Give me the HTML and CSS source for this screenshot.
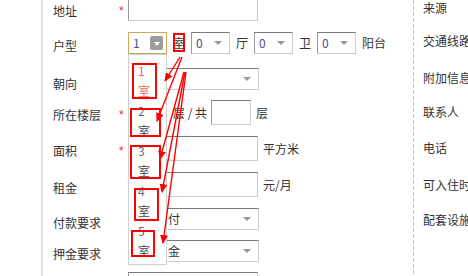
FILE: index.html
```html
<!DOCTYPE html>
<html lang="zh-CN">
<head>
<meta charset="utf-8">
<title>房源信息</title>
<link rel="stylesheet" href="styles.css">
</head>
<body>
<div class="page">
  <div class="side"></div>
  <div class="form">
    <div class="row h36">
      <div class="label">地址</div><div class="star">*</div>
      <div class="field"><input class="input w130" type="text"></div>
    </div>
    <div class="row h36 lb8">
      <div class="label">户型</div><div class="star"></div>
      <div class="field">
        <div class="select sm focus">
          <span class="val">1</span><span class="btn"><span class="tri white"></span></span>
          <ul class="menu">
            <li class="on"><span>1</span><span>室</span></li>
            <li><span class="num">2</span><span>室</span></li>
            <li><span class="num">3</span><span>室</span></li>
            <li><span class="num">4</span><span>室</span></li>
            <li><span class="num">5</span><span>室</span></li>
          </ul>
        </div>
        <span class="unit">室</span>
        <div class="select sm"><span class="val">0</span><span class="tri"></span></div>
        <span class="unit">厅</span>
        <div class="select sm"><span class="val">0</span><span class="tri"></span></div>
        <span class="unit">卫</span>
        <div class="select sm"><span class="val">0</span><span class="tri"></span></div>
        <span class="unit">阳台</span>
      </div>
    </div>
    <div class="row h32 lb10">
      <div class="label">朝向</div><div class="star"></div>
      <div class="field"><div class="select w131"><span class="tri"></span></div></div>
    </div>
    <div class="row h36">
      <div class="label">所在楼层</div><div class="star">*</div>
      <div class="field">
        <input class="input w39" type="text">
        <span class="unit slash">层 / 共</span>
        <input class="input w40" type="text">
        <span class="unit after">层</span>
      </div>
    </div>
    <div class="row h36">
      <div class="label">面积</div><div class="star">*</div>
      <div class="field"><input class="input w130" type="text"><span class="unit after">平方米</span></div>
    </div>
    <div class="row h36 lb10">
      <div class="label">租金</div><div class="star"></div>
      <div class="field"><input class="input w130" type="text"><span class="unit after">元/月</span></div>
    </div>
    <div class="row h32">
      <div class="label">付款要求</div><div class="star"></div>
      <div class="field"><div class="select w131 behind"><span class="val">付</span><span class="tri"></span></div></div>
    </div>
    <div class="row h32 lb8">
      <div class="label">押金要求</div><div class="star"></div>
      <div class="field"><div class="select w131 behind"><span class="val">金</span><span class="tri"></span></div></div>
    </div>
    <div class="row h36">
      <div class="label"></div><div class="star"></div>
      <div class="field"><input class="input w130" type="text"></div>
    </div>
  </div>
  <div class="divider"></div>
  <div class="aside">
    <div class="alabel h33">来源</div>
    <div class="alabel h37">交通线路</div>
    <div class="alabel h34">附加信息</div>
    <div class="alabel h36">联系人</div>
    <div class="alabel h37">电话</div>
    <div class="alabel h35">可入住时间</div>
    <div class="alabel h35">配套设施</div>
  </div>

  <svg class="notes" width="468" height="276" viewBox="0 0 468 276">
    <defs>
      <marker id="ah" markerWidth="9" markerHeight="8" refX="8" refY="4" orient="auto" markerUnits="userSpaceOnUse">
        <path d="M0,0 L9,4 L0,8 Z" fill="#f00"/>
      </marker>
    </defs>
    <g fill="none" stroke="#f00" stroke-width="2">
      <rect x="174" y="34" width="10" height="17"/>
      <rect x="133" y="64" width="23" height="34"/>
      <rect x="131" y="109" width="29" height="27"/>
      <rect x="131" y="146" width="29" height="32"/>
      <rect x="135" y="189" width="23" height="31"/>
      <rect x="132" y="231" width="22" height="25"/>
    </g>
    <g fill="none" stroke="#f00" stroke-width="1.4">
      <line x1="180" y1="57" x2="165" y2="81" marker-end="url(#ah)"/>
      <line x1="182" y1="57" x2="157" y2="121" marker-end="url(#ah)"/>
      <line x1="184" y1="72" x2="160" y2="159" marker-end="url(#ah)"/>
      <line x1="185" y1="72" x2="162" y2="192" marker-end="url(#ah)"/>
      <line x1="186" y1="72" x2="163" y2="243" marker-end="url(#ah)"/>
    </g>
  </svg>
</div>
</body>
</html>
```

FILE: styles.css
```css
html, body {
  margin: 0;
  padding: 0;
  background: #fff;
}

body {
  font-family: "Noto Sans CJK SC", "Liberation Sans", sans-serif;
  font-size: 12px;
  color: #333;
}

.page {
  position: relative;
  width: 468px;
  height: 276px;
  overflow: hidden;
  display: flex;
  align-items: flex-start;
}

.side {
  flex: none;
  width: 41px;
  height: 276px;
  border-right: 2px solid #d8e5f0;
}

.form {
  flex: none;
  width: 370px;
  box-sizing: border-box;
  padding-left: 10px;
  margin-top: -4px;
}

.row {
  display: flex;
  align-items: flex-start;
  height: 36px;
}
.row.h32 { height: 32px; }

.label,
.star {
  flex: none;
  line-height: 12px;
  padding-top: 9px;
  white-space: nowrap;
}
.row.lb8 .label, .row.lb8 .star { padding-top: 8px; }
.row.lb10 .label, .row.lb10 .star { padding-top: 10px; }

.label { width: 66px; }
.star {
  width: 9px;
  color: #f22;
  font-family: "Liberation Sans", sans-serif;
}

.field {
  display: flex;
  align-items: center;
}

.input {
  display: block;
  margin: 0;
  padding: 0;
  height: 25px;
  box-sizing: border-box;
  border: 1px solid #cccccc;
  border-top-color: #777;
  border-left-color: #999;
  background: #fff;
  outline: none;
}
.w130 { width: 130px; }
.w131 { width: 131px; }
.w39 { width: 39px; }
.w40 { width: 40px; }

.unit {
  margin: 0 6px;
  line-height: 16px;
  white-space: nowrap;
}
.unit.slash { margin: 0 4px 0 6px; }
.unit.after { margin: 0 0 0 5px; }

.select {
  position: relative;
  display: flex;
  align-items: center;
  height: 22px;
  box-sizing: border-box;
  padding-left: 4px;
  border: 1px solid #cccccc;
  border-top-color: #7a7a7a;
  border-left-color: #999;
  background: #fff;
}
.select.sm { width: 39px; }
.select.focus { border-color: #d0a85c; }
.select.behind { padding-left: 39px; }

.val {
  line-height: 16px;
  white-space: nowrap;
}
.select.sm .val { color: #554c8c; }

.tri {
  margin-left: auto;
  margin-right: 7px;
  width: 0;
  height: 0;
  border-left: 4px solid transparent;
  border-right: 4px solid transparent;
  border-top: 4px solid #9a9a9a;
}

.btn {
  margin-left: auto;
  margin-right: 3px;
  width: 13px;
  height: 14px;
  border-radius: 2px;
  background: #9c9c9c;
  display: flex;
  align-items: center;
  justify-content: center;
}
.tri.white {
  margin: 1px 0 0 0;
  border-top-color: #fff;
  border-left-width: 3.5px;
  border-right-width: 3.5px;
}

.menu {
  position: absolute;
  left: -1px;
  top: calc(100% + 1px);
  z-index: 5;
  width: 39px;
  height: 211px;
  box-sizing: border-box;
  margin: 0;
  padding: 6px 0 3px 9px;
  list-style: none;
  border: 1px solid #d0d0d0;
  background: #fff;
}
.menu li {
  height: 40px;
  display: flex;
  flex-direction: column;
  line-height: 20px;
  color: #444;
}
.menu li .num { color: #667; }
.menu li.on { color: #f5655a; }

.divider {
  flex: none;
  width: 1px;
  height: 276px;
  background: repeating-linear-gradient(to bottom, #c4c4c4 0, #c4c4c4 4px, transparent 4px, transparent 6px);
}

.aside {
  flex: 1;
  padding-left: 9px;
  white-space: nowrap;
}
.alabel { line-height: 16px; }
.alabel.h33 { height: 33px; }
.alabel.h34 { height: 34px; }
.alabel.h35 { height: 35px; }
.alabel.h36 { height: 36px; }
.alabel.h37 { height: 37px; }

.notes {
  position: absolute;
  left: 0;
  top: 0;
  z-index: 10;
  pointer-events: none;
}
```
